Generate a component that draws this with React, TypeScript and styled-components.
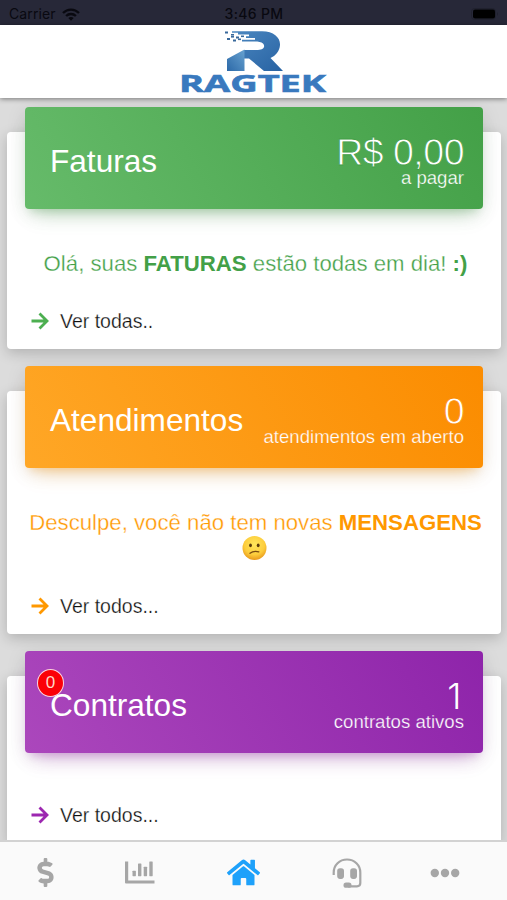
import React from "react";
import styled, { createGlobalStyle, css } from "styled-components";
import { FaDollarSign, FaHome } from "react-icons/fa";

const GlobalStyle = createGlobalStyle`
  * { box-sizing: border-box; }
  body { margin: 0; font-family: "Liberation Sans", Arial, sans-serif; background: #dcdcdc; }
`;

const Screen = styled.div`
  width: 100%;
  max-width: 507px;
  height: 900px;
  overflow: hidden;
  display: flex;
  flex-direction: column;
  background: #dcdcdc;
`;

const StatusBar = styled.div`
  flex: none;
  height: 25px;
  padding: 3px 8px 0 9px;
  display: grid;
  grid-template-columns: 1fr auto 1fr;
  align-items: center;
  background: #272838;
  color: #090910;
  font: 400 14px/20px Inter, sans-serif;
`;

const Carrier = styled.div`
  display: flex;
  align-items: center;
  gap: 6px;
  letter-spacing: 0.1px;
`;

const Clock = styled.div`
  font-weight: 500;
  letter-spacing: 0.35px;
`;

const BatteryIcon = styled.svg`
  justify-self: end;
`;

const Header = styled.header`
  flex: none;
  height: 73px;
  padding-right: 3px;
  display: flex;
  justify-content: center;
  background: #fff;
  box-shadow: 0 1px 5px rgba(0, 0, 0, 0.45);
  z-index: 1;
`;

const Feed = styled.main`
  flex: 1;
  min-height: 0;
  overflow: hidden;
  padding: 34px 6px 0 7px;
  display: flex;
  flex-direction: column;
  gap: 42px;
`;

const Card = styled.section<{ $height: number }>`
  flex: none;
  height: ${(p) => p.$height}px;
  display: flex;
  flex-direction: column;
  padding: 0 18px 16px;
  border-radius: 4px;
  background: #fff;
  box-shadow: 0 4px 14px rgba(0, 0, 0, 0.2);
`;

const tones = {
  green: { from: "#66bb6a", to: "#43a047", main: "#43a047", icon: "#4caf50" },
  orange: { from: "#ffa726", to: "#fb8c00", main: "#ff9800", icon: "#ff9800" },
  purple: { from: "#ab47bc", to: "#8e24aa", main: "#9c27b0", icon: "#9c27b0" },
};
type Tone = keyof typeof tones;

const Banner = styled.div<{ $tone: Tone }>`
  position: relative;
  flex: none;
  height: 102px;
  margin-top: -25px;
  padding: 0 19px 0 25px;
  display: flex;
  justify-content: space-between;
  align-items: center;
  border-radius: 4px;
  color: #fff;
  background: linear-gradient(60deg, ${(p) => tones[p.$tone].from}, ${(p) => tones[p.$tone].to});
  box-shadow: 0 12px 20px -10px ${(p) => tones[p.$tone].main}60, 0 4px 20px rgba(0, 0, 0, 0.1),
    0 7px 8px -5px ${(p) => tones[p.$tone].main}33;
`;

const Title = styled.h2`
  margin: 6px 0 0;
  font-size: 31.6px;
  font-weight: 400;
  line-height: 36px;
  white-space: nowrap;
`;

/* A hairline in the backdrop colour slims the regular weight down to a light one. */
const light = (color: string, width: number) => css`
  -webkit-text-stroke: ${width}px ${color};
`;

const Summary = styled.div<{ $tone: Tone }>`
  display: flex;
  flex-direction: column;
  align-items: flex-end;
  white-space: nowrap;
  margin-top: 8px;
  ${(p) => light(tones[p.$tone].to, 0.25)}
`;

const Amount = styled.div<{ $thin?: boolean }>`
  font-size: 37.5px;
  line-height: 32px;
  letter-spacing: -0.5px;
  -webkit-text-stroke-width: 0.8px;
  ${(p) =>
    p.$thin &&
    css`
      padding-right: 3px;
      font-family: Inter, sans-serif;
      font-size: 36px;
      font-weight: 300;
      -webkit-text-stroke-width: 0;
    `}
`;

const Caption = styled.div`
  font-size: 18.6px;
  line-height: 20px;
`;

const Badge = styled.span`
  position: absolute;
  left: 12px;
  top: 18px;
  width: 27px;
  height: 28px;
  border: 1.5px solid #fbd5e0;
  border-radius: 50%;
  display: flex;
  align-items: center;
  justify-content: center;
  background: #fb0007;
  color: #ffd5c8;
  font-size: 17px;
`;

const Message = styled.div<{ $tone: Tone }>`
  margin: 42px -4px 0;
  font-size: 22.2px;
  line-height: 26px;
  text-align: center;
  color: ${(p) => tones[p.$tone].main};
  ${light("#fff", 0.32)}
`;

const Strong = styled.strong`
  -webkit-text-stroke: 0;
`;

const Line = styled.div`
  padding-left: 3px;
  white-space: nowrap;
`;

const EmojiIcon = styled.svg`
  display: block;
  margin: -1px auto 0;
`;

const MoreLink = styled.a`
  margin-top: auto;
  padding-left: 6px;
  display: flex;
  align-items: center;
  gap: 11px;
  color: #111;
  font-size: 19.5px;
  line-height: 24px;
  text-decoration: none;
  ${light("#fff", 0.25)}
`;

const TabBar = styled.nav`
  flex: none;
  height: 60px;
  padding: 3px 16px 0 0;
  border-top: 2px solid #d2d2d2;
  display: grid;
  grid-template-columns: 90px 100px 106px 102px 1fr;
  background: #fafafa;
  z-index: 1;
`;

const Tab = styled.button<{ $active?: boolean }>`
  padding: 0;
  border: 0;
  background: none;
  display: flex;
  align-items: center;
  justify-content: center;
  color: ${(p) => (p.$active ? "#1ea1fa" : "#a6a6a6")};
`;

const Wifi = () => (
  <svg width="18" height="13" viewBox="0 0 18 13" fill="none" stroke="currentColor" strokeWidth="2.3">
    <path d="M1 5C5.5.4 12.500.4 17 5" />
    <path d="M4.100 8C6.800 5.300 11.200 5.300 13.900 8" />
    <path d="M6.300 10L9 12.800 11.700 10C10.200 8.700 7.800 8.700 6.300 10Z" fill="currentColor" stroke="none" />
  </svg>
);

const Battery = () => (
  <BatteryIcon width="28" height="12" viewBox="0 0 28 12">
    <rect x=".5" y=".5" width="24" height="11" rx="3" fill="none" stroke="#20212e" />
    <rect x="2" y="1.500" width="22" height="9" rx="2" fill="#000" />
    <path d="M26 4v4q1.500-2 0-4Z" fill="#1c1d29" />
  </BatteryIcon>
);

const Logo = () => (
  <svg width="150" height="73" viewBox="0 0 150 73">
    <defs>
      <linearGradient id="stroke" x1="0" y1="0" x2="1" y2="1">
        <stop offset="0" stopColor="#4b87c0" />
        <stop offset="1" stopColor="#2863a3" />
      </linearGradient>
      <linearGradient id="leg" x1="0" y1="1" x2="1" y2="0">
        <stop offset="0" stopColor="#2c69a8" />
        <stop offset="1" stopColor="#68a2d0" />
      </linearGradient>
    </defs>
    <path
      d="M55 6.300H85C97 6.300 103.500 13 103 20C102.700 26 98.500 31 93.500 33L106 46H87L72 33.500H67V25H81C87 25 88.500 21 86 18.500C84.500 17 81 16.500 78 16.500H65V14.700H78V13H69V11.300H72V9.500H61V7.700H55Z"
      fill="url(#stroke)"
    />
    <path d="M50 34L67.500 24.500V46H50Z" fill="url(#leg)" />
    <g fill="#39699b">
      <rect x="48" y="6.500" width="3" height="2" />
      <rect x="54" y="9" width="3" height="1.600" />
      <rect x="50" y="13" width="3" height="2" />
      <rect x="54" y="11" width="3" height="1.600" />
      <rect x="59" y="11.500" width="3" height="2" />
      <rect x="56" y="14.500" width="3" height="2" />
      <rect x="64" y="10.500" width="3" height="1.600" />
      <rect x="61" y="13.500" width="3" height="1.600" />
    </g>
    <text
      x="2"
      y="66.700"
      textLength="147"
      lengthAdjust="spacingAndGlyphs"
      fontFamily="Open Sans, sans-serif"
      fontWeight="700"
      fontSize="23.5"
      fill="#3979be"
      stroke="#3979be"
      strokeWidth=".6"
    >
      RAGTEK
    </text>
  </svg>
);

const Arrow = ({ tone }: { tone: Tone }) => (
  <svg width="18" height="18" viewBox="0 0 18 18" fill="none" stroke={tones[tone].icon} strokeWidth="2.8">
    <path d="M.500 9H16M8.500 1.500L16 9L8.500 16.500" />
  </svg>
);

const ConfusedFace = () => (
  <EmojiIcon width="25" height="26" viewBox="0 0 25 25">
    <defs>
      <radialGradient id="face" cx=".5" cy=".35" r=".65">
        <stop offset="0" stopColor="#ffe65c" />
        <stop offset=".65" stopColor="#fdcd3c" />
        <stop offset="1" stopColor="#e99a1c" />
      </radialGradient>
    </defs>
    <circle cx="12.500" cy="12.500" r="12" fill="url(#face)" />
    <ellipse cx="8.500" cy="9.800" rx="1.400" ry="1.900" fill="#5b3a0c" />
    <ellipse cx="16.200" cy="9.800" rx="1.400" ry="1.900" fill="#5b3a0c" />
    <path d="M8 17.800Q11.500 14.900 16.800 16.300" fill="none" stroke="#7a4b10" strokeWidth="1.300" strokeLinecap="round" />
  </EmojiIcon>
);

const BarChart = () => (
  <svg width="30" height="23" viewBox="0 0 30 23" fill="currentColor">
    <path d="M0 .5H3.200V19.500H29.500V22.500H1Q0 22.500 0 21.500Z" />
    <rect x="7.500" y="9.700" width="3.400" height="5.500" rx=".6" />
    <rect x="13" y="2.500" width="3.400" height="12.700" rx=".6" />
    <rect x="18.700" y="5.700" width="3.400" height="9.500" rx=".6" />
    <rect x="24.300" y=".5" width="3.400" height="14.700" rx=".6" />
  </svg>
);

const Headset = () => (
  <svg width="30" height="30" viewBox="0 0 30 30" fill="none" stroke="currentColor" strokeWidth="2.2">
    <path d="M1.700 17V14.500C1.700 7 7.500 1.500 15 1.500S28.300 7 28.300 14.500V25C28.300 27.400 27 28.300 25 28.300H16" />
    <rect x="5.200" y="10.300" width="6.800" height="10.600" rx="2.800" fill="currentColor" stroke="none" />
    <rect x="18.200" y="10.300" width="6.800" height="10.600" rx="2.800" fill="currentColor" stroke="none" />
    <rect x="11.500" y="24.500" width="8" height="5.300" rx="2.600" fill="currentColor" stroke="none" />
  </svg>
);

const Dots = () => (
  <svg width="30" height="10" viewBox="0 0 30 10" fill="currentColor">
    <circle cx="4.800" cy="5" r="4.200" />
    <circle cx="15" cy="5" r="4.200" />
    <circle cx="25.200" cy="5" r="4.200" />
  </svg>
);

export default function App() {
  return (
    <>
      <GlobalStyle />
      <Screen>
        <StatusBar>
          <Carrier>
            Carrier <Wifi />
          </Carrier>
          <Clock>3:46 PM</Clock>
          <Battery />
        </StatusBar>
        <Header>
          <Logo />
        </Header>
        <Feed>
          <Card $height={217}>
            <Banner $tone="green">
              <Title>Faturas</Title>
              <Summary $tone="green">
                <Amount>R$ 0,00</Amount>
                <Caption>a pagar</Caption>
              </Summary>
            </Banner>
            <Message $tone="green">
              <Line>
                Olá, suas <Strong>FATURAS</Strong> estão todas em dia! <Strong>:)</Strong>
              </Line>
            </Message>
            <MoreLink>
              <Arrow tone="green" />
              Ver todas..
            </MoreLink>
          </Card>
          <Card $height={243}>
            <Banner $tone="orange">
              <Title>Atendimentos</Title>
              <Summary $tone="orange">
                <Amount>0</Amount>
                <Caption>atendimentos em aberto</Caption>
              </Summary>
            </Banner>
            <Message $tone="orange">
              <Line>
                Desculpe, você não tem novas <Strong>MENSAGENS</Strong>
              </Line>
              <ConfusedFace />
            </Message>
            <MoreLink>
              <Arrow tone="orange" />
              Ver todos...
            </MoreLink>
          </Card>
          <Card $height={167}>
            <Banner $tone="purple">
              <Badge>0</Badge>
              <Title>Contratos</Title>
              <Summary $tone="purple">
                <Amount $thin>1</Amount>
                <Caption>contratos ativos</Caption>
              </Summary>
            </Banner>
            <MoreLink>
              <Arrow tone="purple" />
              Ver todos...
            </MoreLink>
          </Card>
        </Feed>
        <TabBar>
          <Tab aria-label="Faturas"><FaDollarSign size={29} /></Tab>
          <Tab aria-label="Consumo"><BarChart /></Tab>
          <Tab aria-label="Início" $active><FaHome size={33} /></Tab>
          <Tab aria-label="Suporte"><Headset /></Tab>
          <Tab aria-label="Mais"><Dots /></Tab>
        </TabBar>
      </Screen>
    </>
  );
}
